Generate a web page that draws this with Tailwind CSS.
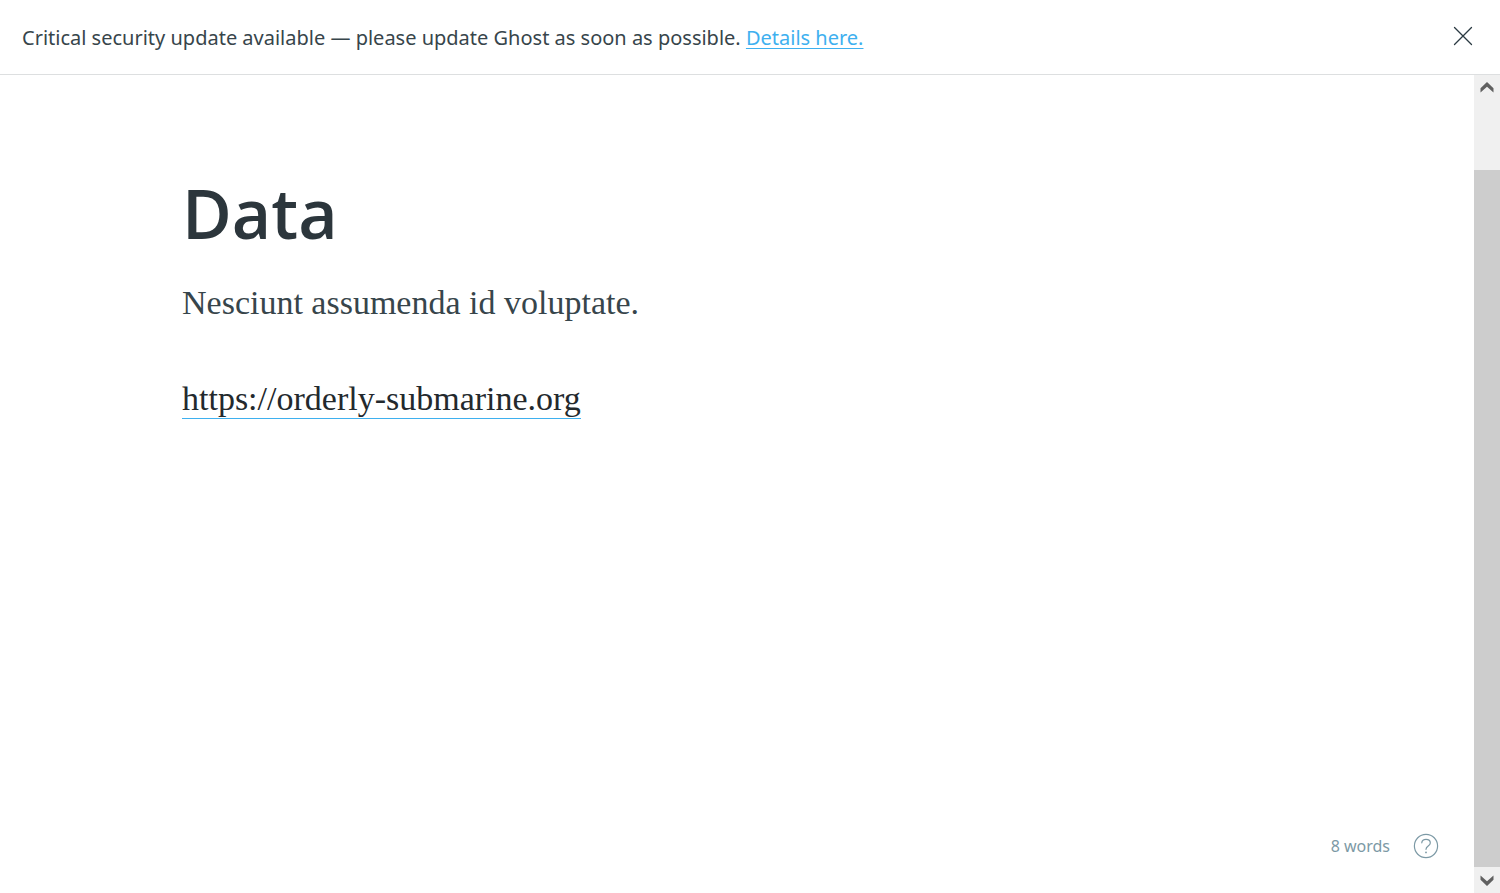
<!DOCTYPE html>
<html lang="en">
<head>
<meta charset="utf-8">
<meta name="viewport" content="width=device-width, initial-scale=1">
<title>Data - Ghost editor</title>
<script src="https://cdn.jsdelivr.net/npm/@tailwindcss/browser@4"></script>
</head>
<body class="flex h-screen flex-col overflow-hidden bg-white font-['Noto_Sans','Open_Sans',sans-serif] text-[#394047]">
  <aside class="flex shrink-0 items-center justify-between border-b border-[#dddfe0] pt-[22px] pr-6 pb-5 pl-[22px]">
    <p class="text-[20px] leading-8 text-[#37454b]">Critical security update available — please update Ghost as soon as possible. <a href="#details" class="text-[#3eb0ef] underline decoration-[#3eb0ef] decoration-1 underline-offset-3">Details here.</a></p>
    <button type="button" aria-label="Close notification" class="flex h-8 w-[26px] items-center justify-center pb-1 text-[#2b3a42]">
      <svg class="h-5 w-5" viewBox="0 0 20 20" fill="none" stroke="currentColor" stroke-width="1.3" stroke-linecap="round" aria-hidden="true"><path d="M1.5 1.5 18.5 18.5M18.5 1.5 1.5 18.5"/></svg>
    </button>
  </aside>
  <div class="flex min-h-0 flex-1">
    <main class="flex min-w-0 flex-1 flex-col">
      <article class="mx-auto w-full max-w-[1110px] flex-1 pt-24">
        <h1 class="font-['Open_Sans',sans-serif] text-[68px] leading-[84px] font-semibold text-[#2c363c]">Data</h1>
        <div class="pt-6 font-['Liberation_Serif',serif] text-[34px] leading-12 text-[#37454b]">
          <p class="mb-12">Nesciunt assumenda id voluptate.</p>
          <p><a href="https://orderly-submarine.org" class="border-b border-[#3eb0ef] pb-px text-[#23292d]">https://orderly-submarine.org</a></p>
        </div>
      </article>
      <footer class="flex items-center justify-end gap-[23px] pr-[35px] pb-[34px] text-[16px] leading-[26px] text-[#7c99a5]">
        <span>8 words</span>
        <button type="button" aria-label="Markdown help" class="h-[26px] w-[26px]">
          <svg class="h-[26px] w-[26px]" viewBox="0 0 26 26" fill="none" stroke="currentColor" stroke-width="1.2" stroke-linecap="round" stroke-linejoin="round" aria-hidden="true"><circle cx="13" cy="13" r="11.6"/><path d="M8.8 9.8C8.8 7.4 10.6 6.3 13 6.3s4.3 1.3 4.3 3.6c0 3.2-4.3 3-4.3 6.4"/><circle cx="13" cy="19.4" r=".9" fill="currentColor" stroke="none"/></svg>
        </button>
      </footer>
    </main>
    <div class="flex w-[26px] shrink-0 flex-col bg-[#f0f0f0] text-[#606060]">
      <button type="button" aria-label="Scroll up" class="h-[26px] w-[26px] shrink-0">
        <svg class="h-[26px] w-[26px]" viewBox="0 0 26 26" fill="currentColor" aria-hidden="true"><path d="M13 7 19.5 13.2V17.4L13 11.7 6.5 17.4V13.2Z"/></svg>
      </button>
      <div class="flex flex-1 flex-col justify-end"><div class="h-[91%] bg-[#cdcdcd]"></div></div>
      <button type="button" aria-label="Scroll down" class="h-[26px] w-[26px] shrink-0">
        <svg class="h-[26px] w-[26px]" viewBox="0 0 26 26" fill="currentColor" aria-hidden="true"><path d="M13 19 19.5 12.8V8.6L13 14.3 6.5 8.6V12.8Z"/></svg>
      </button>
    </div>
  </div>
</body>
</html>
